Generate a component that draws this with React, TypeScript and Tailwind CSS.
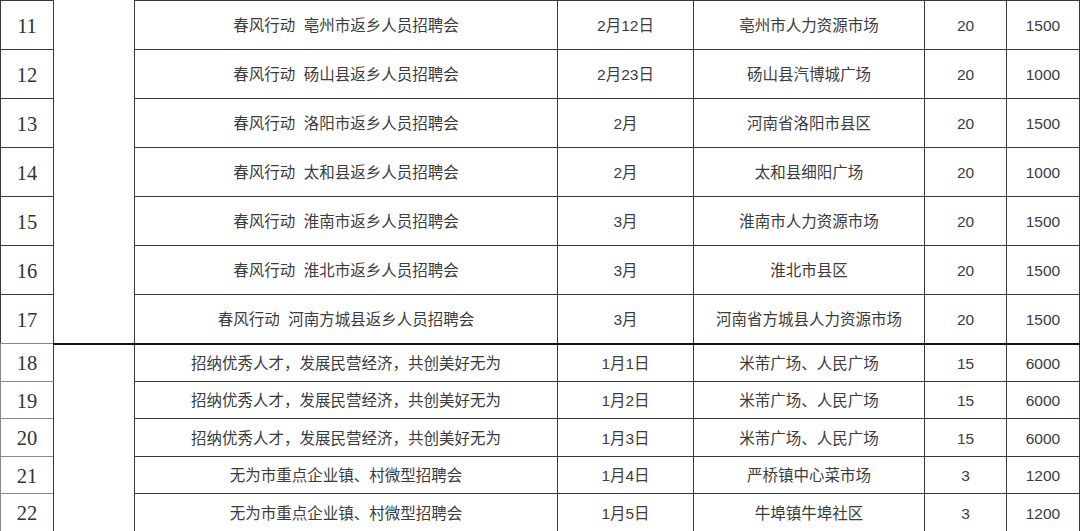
type Row = {
  no: number;
  title: string;
  date: string;
  place: string;
  count: string;
  jobs: string;
};

const spring: Row[] = [
  { no: 11, title: "春风行动  亳州市返乡人员招聘会", date: "2月12日", place: "亳州市人力资源市场", count: "20", jobs: "1500" },
  { no: 12, title: "春风行动  砀山县返乡人员招聘会", date: "2月23日", place: "砀山县汽博城广场", count: "20", jobs: "1000" },
  { no: 13, title: "春风行动  洛阳市返乡人员招聘会", date: "2月", place: "河南省洛阳市县区", count: "20", jobs: "1500" },
  { no: 14, title: "春风行动  太和县返乡人员招聘会", date: "2月", place: "太和县细阳广场", count: "20", jobs: "1000" },
  { no: 15, title: "春风行动  淮南市返乡人员招聘会", date: "3月", place: "淮南市人力资源市场", count: "20", jobs: "1500" },
  { no: 16, title: "春风行动  淮北市返乡人员招聘会", date: "3月", place: "淮北市县区", count: "20", jobs: "1500" },
  { no: 17, title: "春风行动  河南方城县返乡人员招聘会", date: "3月", place: "河南省方城县人力资源市场", count: "20", jobs: "1500" },
];

const wuwei: Row[] = [
  { no: 18, title: "招纳优秀人才，发展民营经济，共创美好无为", date: "1月1日", place: "米芾广场、人民广场", count: "15", jobs: "6000" },
  { no: 19, title: "招纳优秀人才，发展民营经济，共创美好无为", date: "1月2日", place: "米芾广场、人民广场", count: "15", jobs: "6000" },
  { no: 20, title: "招纳优秀人才，发展民营经济，共创美好无为", date: "1月3日", place: "米芾广场、人民广场", count: "15", jobs: "6000" },
  { no: 21, title: "无为市重点企业镇、村微型招聘会", date: "1月4日", place: "严桥镇中心菜市场", count: "3", jobs: "1200" },
  { no: 22, title: "无为市重点企业镇、村微型招聘会", date: "1月5日", place: "牛埠镇牛埠社区", count: "3", jobs: "1200" },
];

const cell = "border border-[#3a3a3a] text-center align-middle p-0 pt-[2px]";

export default function App() {
  return (
    <div className="w-[1080px] h-[531px] overflow-hidden bg-white">
      <table className="table-fixed border-collapse w-[1079px] text-[#3c3c3c] text-[15.5px] font-['Liberation_Sans','Noto_Sans_CJK_SC',sans-serif] whitespace-pre">
        <colgroup>
          <col className="w-[53px]" />
          <col className="w-[81px]" />
          <col className="w-[423px]" />
          <col className="w-[136px]" />
          <col className="w-[231px]" />
          <col className="w-[82px]" />
          <col className="w-[73px]" />
        </colgroup>
        <tbody>
          {spring.map((r, i) => (
            <tr key={r.no} className="h-[49px]">
              <td
                className={`${cell} font-['Liberation_Serif',serif] text-[20.5px] text-[#333] ${
                  i === spring.length - 1 ? "border-b-[#888]" : ""
                }`}
              >
                {r.no}
              </td>
              {i === 0 && (
                <td rowSpan={spring.length} className={`${cell} border-t-white border-b-2 border-b-[#111]`} />
              )}
              {[r.title, r.date, r.place, r.count, r.jobs].map((v, k) => (
                <td key={k} className={`${cell} ${i === spring.length - 1 ? "border-b-2 border-b-[#111]" : ""}`}>
                  {v}
                </td>
              ))}
            </tr>
          ))}
          {wuwei.map((r, i) => (
            <tr key={r.no} className="h-[37.6px]">
              <td className={`${cell} border-[#8a8a8a] border-r-[#3a3a3a] font-['Liberation_Serif',serif] text-[20.5px] text-[#333]`}>
                {r.no}
              </td>
              {i === 0 && <td rowSpan={wuwei.length} className={`${cell} border-b-white`} />}
              {[r.title, r.date, r.place, r.count, r.jobs].map((v, k) => (
                <td key={k} className={cell}>
                  {v}
                </td>
              ))}
            </tr>
          ))}
        </tbody>
      </table>
    </div>
  );
}
